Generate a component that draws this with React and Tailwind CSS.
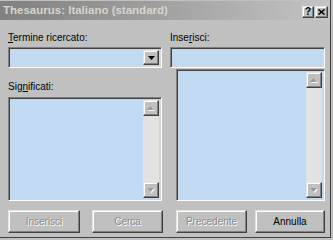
import React from "react";

const raised =
  "border border-t-[#e4e4e4] border-l-[#e4e4e4] border-r-[#404040] border-b-[#404040] shadow-[inset_-1px_-1px_#808080,inset_1px_1px_#ffffff]";
const sunken =
  "border border-t-[#808080] border-l-[#808080] border-r-white border-b-white shadow-[inset_1px_1px_#404040,inset_-1px_-1px_#d4d4d4]";

function Arrow({ dir = "down", color = "#000" }) {
  const pts = dir === "down" ? "0,0 7,0 3.5,4" : "3.5,0 7,4 0,4";
  return (
    <svg width="7" height="4" viewBox="0 0 7 4">
      <polygon points={pts} fill={color} />
    </svg>
  );
}

function DisArrow({ dir }) {
  return (
    <div className="relative w-[8px] h-[5px]">
      <div className="absolute left-[1px] top-[1px]">
        <Arrow dir={dir} color="#ffffff" />
      </div>
      <div className="absolute left-0 top-0">
        <Arrow dir={dir} color="#9a9a9a" />
      </div>
    </div>
  );
}

function ScrollList({ className }) {
  return (
    <div className={`${sunken} ${className} flex p-[2px] bg-[#c2d9f2]`}>
      <div className="flex-1 bg-[#c2d9f2]" />
      <div className="w-[16px] flex flex-col">
        <div className={`${raised} h-[16px] bg-[#c0c0c0] flex items-center justify-center`}>
          <DisArrow dir="up" />
        </div>
        <div className="flex-1 bg-[#e2e2e2]" />
        <div className={`${raised} h-[16px] bg-[#c0c0c0] flex items-center justify-center`}>
          <DisArrow dir="down" />
        </div>
      </div>
    </div>
  );
}

function Btn({ children, disabled, className }) {
  return (
    <div
      className={`${raised} ${className} h-[23px] bg-[#c0c0c0] flex items-center justify-center text-[10px] ${
        disabled ? "text-[#8a8a8a] [text-shadow:1px_1px_#ffffff]" : "text-black"
      }`}
    >
      {children}
    </div>
  );
}

export default function App() {
  return (
    <div
      className="w-[333px] h-[240px] bg-[#c0c0c0] flex flex-col overflow-hidden shadow-[inset_-2px_-2px_#c0c0c0,inset_-3px_-3px_#404040]"
      style={{ fontFamily: '"Liberation Sans", Arial, sans-serif' }}
    >
      {/* title bar */}
      <div className="h-[19px] mt-[1px] mr-[3px] bg-gradient-to-r from-[#808080] to-[#c4c4c4] flex items-center pl-[3px] pr-[2px]">
        <span className="text-[11.5px] font-bold text-[#d8d4cc] leading-none">
          Thesaurus: Italiano (standard)
        </span>
        <div className="ml-auto flex gap-[1px] mt-[2px]">
          <div className={`${raised} w-[12px] h-[12px] bg-[#c0c0c0] flex items-center justify-center text-[10px] font-bold leading-none text-black`}>
            ?
          </div>
          <div className={`${raised} w-[13px] h-[12px] bg-[#c0c0c0] flex items-center justify-center`}>
            <svg width="7" height="6" viewBox="0 0 7 6">
              <path d="M0.5 0.5 L6.5 5.5 M6.5 0.5 L0.5 5.5" stroke="#000" strokeWidth="1.6" />
            </svg>
          </div>
        </div>
      </div>

      {/* body */}
      <div className="flex pl-[8px] pt-[11px] text-[10px] text-black">
        {/* left column */}
        <div className="w-[154px] flex flex-col">
          <div className="h-[16px] leading-[14px]">
            <span className="underline">T</span>ermine ricercato:
          </div>
          <div className={`${sunken} h-[21px] bg-[#c2d9f2] flex justify-end p-[2px]`}>
            <div className={`${raised} w-[16px] bg-[#c0c0c0] flex items-center justify-center`}>
              <Arrow dir="down" />
            </div>
          </div>
          <div className="mt-[12px] h-[14px] leading-[14px] mb-[3px]">
            Sig<span className="underline">n</span>ificati:
          </div>
          <ScrollList className="h-[104px]" />
        </div>

        {/* right column */}
        <div className="w-[155px] ml-[8px] flex flex-col">
          <div className="h-[16px] leading-[14px]">
            Inse<span className="underline">r</span>isci:
          </div>
          <div className={`${sunken} h-[21px] bg-[#c2d9f2]`} />
          <ScrollList className="h-[132px] ml-[6px] mt-[1px]" />
        </div>
      </div>

      {/* buttons */}
      <div className="flex pl-[8px] mt-[9px]">
        <Btn disabled className="w-[72px]">Inserisci</Btn>
        <Btn disabled className="w-[71px] ml-[12px]">Cerca</Btn>
        <Btn disabled className="w-[71px] ml-[13px]">Precedente</Btn>
        <Btn className="w-[70px] ml-[8px]">Annulla</Btn>
      </div>
    </div>
  );
}
